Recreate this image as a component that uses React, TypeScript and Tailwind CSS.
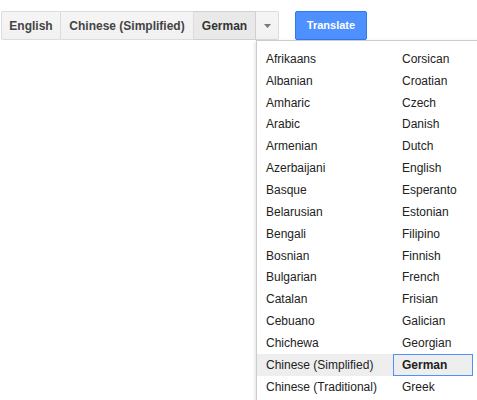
import React from "react";

const col1 = [
  "Afrikaans","Albanian","Amharic","Arabic","Armenian","Azerbaijani","Basque","Belarusian","Bengali","Bosnian","Bulgarian","Catalan","Cebuano","Chichewa","Chinese (Simplified)","Chinese (Traditional)",
];
const col2 = [
  "Corsican","Croatian","Czech","Danish","Dutch","English","Esperanto","Estonian","Filipino","Finnish","French","Frisian","Galician","Georgian","German","Greek",
];

function Item({ label, hover, selected }: { label: string; hover?: boolean; selected?: boolean }) {
  return (
    <div
      className={
        "h-[21.85px] flex items-center pl-[8px] pr-[8px] border whitespace-nowrap " +
        (selected
          ? "border-[#4d90fe] bg-[#eeeeee] font-bold"
          : hover
          ? "border-transparent bg-[#eeeeee]"
          : "border-transparent")
      }
    >
      {label}
    </div>
  );
}

export default function App() {
  return (
    <div
      className="relative w-screen h-screen overflow-hidden bg-white"
      style={{ fontFamily: '"Liberation Sans", Arial, sans-serif' }}
    >
      <div className="flex items-start pt-[11px] pl-[1px]">
        <div className="flex h-[29px] text-[12px] font-bold text-[#444]">
          <div className="w-[60px] flex items-center justify-center border border-[#dcdcdc] rounded-l-[2px] bg-gradient-to-b from-[#f5f5f5] to-[#f1f1f1]">
            English
          </div>
          <div className="w-[133px] flex items-center justify-center border-y border-r border-[#dcdcdc] bg-gradient-to-b from-[#f5f5f5] to-[#f1f1f1]">
            Chinese (Simplified)
          </div>
          <div className="w-[62px] flex items-center justify-center border-y border-r border-[#d0d0d0] bg-[#e9e9e9] text-[#333]">
            German
          </div>
          <div className="flex items-center justify-center w-[23px] border-y border-r border-[#dcdcdc] rounded-r-[2px] bg-gradient-to-b from-[#f5f5f5] to-[#f1f1f1]">
            <svg width="7" height="4" viewBox="0 0 7 4">
              <path d="M0 0 L7 0 L3.5 4 Z" fill="#777" />
            </svg>
          </div>
        </div>
        <div className="ml-[16px] h-[29px] w-[72px] flex items-center justify-center rounded-[2px] border border-[#3079ed] bg-[#4d90fe] text-white text-[11px] font-bold">
          Translate
        </div>
      </div>

      <div className="absolute left-[256px] top-[40px] w-[400px] border border-[#cccccc] bg-white shadow-[0_2px_4px_rgba(0,0,0,0.2)] pt-[7px] pb-[6px] text-[12px] text-[#222]">
        <div className="flex">
          <div className="w-[136px] flex flex-col">
            {col1.map((l) => (
              <Item key={l} label={l} hover={l === "Chinese (Simplified)"} />
            ))}
          </div>
          <div className="w-[80px] flex flex-col">
            {col2.map((l) => (
              <Item key={l} label={l} selected={l === "German"} />
            ))}
          </div>
        </div>
      </div>
    </div>
  );
}
